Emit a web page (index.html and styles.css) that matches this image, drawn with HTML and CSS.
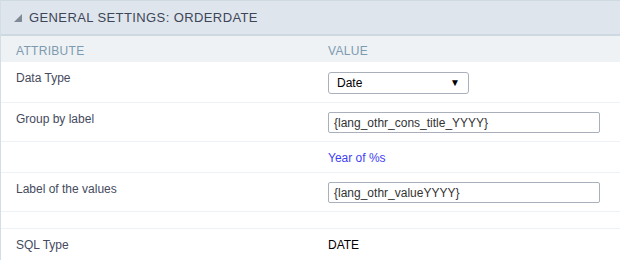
FILE: index.html
```html
<!DOCTYPE html>
<html lang="en">
<head>
<meta charset="UTF-8">
<title>General Settings: orderdate</title>
<link rel="stylesheet" href="styles.css">
</head>
<body>
<div class="painel">
    <div class="titulo"><span class="seta"></span>GENERAL SETTINGS: ORDERDATE</div>
    <div class="linha cabecalho">
        <div>ATTRIBUTE</div>
        <div>VALUE</div>
    </div>
    <div class="linha l-select">
        <div>Data Type</div>
        <div><div class="select">Date<span class="caret">&#9660;</span></div></div>
    </div>
    <div class="linha l-input">
        <div>Group by label</div>
        <div><div class="input">{lang_othr_cons_title_YYYY}</div></div>
    </div>
    <div class="linha l-texto">
        <div></div>
        <div class="azul">Year of %s</div>
    </div>
    <div class="linha l-input">
        <div>Label of the values</div>
        <div><div class="input">{lang_othr_valueYYYY}</div></div>
    </div>
    <div class="linha l-vazia">
        <div></div>
        <div></div>
    </div>
    <div class="linha l-texto2">
        <div>SQL Type</div>
        <div class="preto">DATE</div>
    </div>
</div>
</body>
</html>
```

FILE: styles.css
```css
body { margin: 0; font-family: "Liberation Sans", Arial, sans-serif; background: white; overflow: hidden; }
.painel { width: 640px; border-left: 1px solid #d3dde5; border-top: 1px solid #cfd9e1; }
.titulo { height: 33px; background: #dfe5ec; border-bottom: 2px solid #cdd8e0; display: flex; align-items: center; padding-left: 13px; font-size: 13px; letter-spacing: 0.4px; color: #3d4659; }
.seta { width: 0; height: 0; border-left: 8px solid transparent; border-bottom: 8px solid #808a96; margin-right: 7px; margin-top: 1px; }
.linha { display: grid; grid-template-columns: 312px 1fr; align-items: start; padding: 9px 0 0 15px; box-sizing: border-box; font-size: 12px; line-height: 14px; color: #454a5e; border-bottom: 1px solid #eef1f6; }
.cabecalho { height: 26px; padding-top: 8px; background: #eef2f5; color: #7d9ab0; font-size: 12px; letter-spacing: 0.3px; border-bottom: none; }
.l-select { height: 41px; }
.l-input { height: 39px; }
.l-texto { height: 31px; }
.l-vazia { height: 17px; }
.l-texto2 { height: 32px; }
.select { margin-top: 1px; width: 141px; height: 22px; border: 1px solid #a9b0bb; border-radius: 3px; display: flex; align-items: center; justify-content: space-between; padding: 0 8px; box-sizing: border-box; color: #000; font-size: 12px; }
.caret { font-size: 10px; }
.input { width: 272px; height: 21px; box-sizing: border-box; border: 1px solid #a9b0bb; border-radius: 2px; display: flex; align-items: center; padding-left: 5px; color: #333; font-size: 12px; }
.azul { color: #3f3ff5; }
.preto { color: #000; }
```
